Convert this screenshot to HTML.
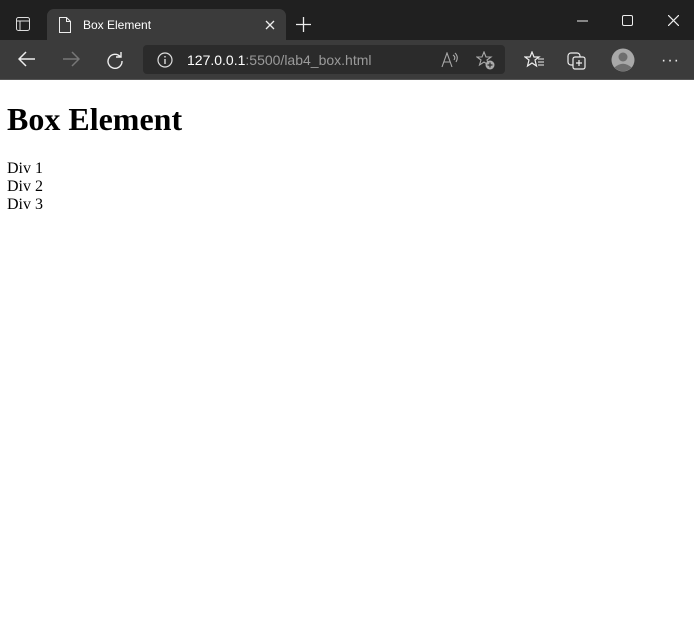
<!DOCTYPE html>
<html><head><style>
*{box-sizing:border-box}
html,body{margin:0;padding:0;width:694px;height:625px;overflow:hidden;background:#fff}
#chrome{position:absolute;left:0;top:0;width:694px;height:80px;background:#202020;font-family:"Liberation Sans",sans-serif}
#tab{position:absolute;left:47px;top:9px;width:239px;height:32px;background:#3b3b3b;border-radius:7px 7px 0 0}
#tool{position:absolute;left:0;top:40px;width:694px;height:39px;background:#3b3b3b}
#line{position:absolute;left:0;top:79px;width:694px;height:1px;background:#555}
#addr{position:absolute;left:143px;top:45px;width:362px;height:29px;background:#2b2b2b;border-radius:4px}
svg{position:absolute}
#page{position:absolute;top:80px;left:0;right:0;padding:0 7px;font-family:"Liberation Serif",serif;font-size:16px;color:#000}
h1{font-size:32px;margin:21px 0 22px;line-height:37px}
.d{line-height:18px}
</style></head><body>
<div id="chrome">
<svg style="left:16px;top:17px" width="14" height="14"><rect x="0.5" y="0.5" width="13" height="13" rx="2" fill="none" stroke="#ddd"/><line x1="0.5" y1="4" x2="13.5" y2="4" stroke="#ddd"/><line x1="4" y1="4" x2="4" y2="13.5" stroke="#ddd"/></svg>
<div id="tab">
<svg style="left:12px;top:8px" width="12" height="16"><path d="M0.5 0.5H7.5L11.5 4.5V15.5H0.5Z M7.5 0.5V4.5H11.5" fill="none" stroke="#eee"/></svg>
<div style="position:absolute;left:36px;top:9px;color:#fff;font-size:12px">Box Element</div>
<svg style="left:218px;top:11px" width="10" height="10"><path d="M1 1L9 9M9 1L1 9" stroke="#eee" stroke-width="1.3"/></svg>
</div>
<svg style="left:296px;top:17px" width="15" height="15"><path d="M7.5 0V15M0 7.5H15" stroke="#eee" stroke-width="1.3"/></svg>
<svg style="left:577px;top:20px" width="11" height="2"><path d="M0 1H11" stroke="#eee"/></svg>
<svg style="left:622px;top:15px" width="11" height="11"><rect x="0.5" y="0.5" width="10" height="10" rx="1.5" fill="none" stroke="#eee"/></svg>
<svg style="left:668px;top:15px" width="11" height="11"><path d="M0 0L11 11M11 0L0 11" stroke="#eee" stroke-width="1.2"/></svg>
<div id="tool"></div><div id="line"></div>
<svg style="left:18px;top:51px" width="18" height="16"><path d="M1 8H17M8 1L1 8L8 15" fill="none" stroke="#eee" stroke-width="1.5"/></svg>
<svg style="left:62px;top:51px" width="18" height="16"><path d="M1 8H17M10 1L17 8L10 15" fill="none" stroke="#777" stroke-width="1.5"/></svg>
<svg style="left:106px;top:51px" width="18" height="18"><path d="M14.5 6A7 7 0 1 0 16 10M15 1V6H10" fill="none" stroke="#eee" stroke-width="1.4"/></svg>
<div id="addr">
<svg style="left:14px;top:7px" width="16" height="16"><circle cx="8" cy="8" r="7" fill="none" stroke="#ddd" stroke-width="1.2"/><path d="M8 7V12M8 4V5.5" stroke="#ddd" stroke-width="1.4"/></svg>
<div style="position:absolute;left:44px;top:7px;font-size:14px;color:#fff">127.0.0.1<span style="color:#9a9a9a">:5500/lab4_box.html</span></div>
<svg style="left:298px;top:7px" width="18" height="16"><path d="M1 15L6 1L11 15M3 10H9M12 3Q15 5 13 8M14 1Q18 5 15 10" fill="none" stroke="#aaa" stroke-width="1.1"/></svg>
<svg style="left:333px;top:6px" width="19" height="19"><path d="M8 1L10 6H15L11 9L12.5 14L8 11L3.5 14L5 9L1 6H6Z" fill="none" stroke="#aaa" stroke-width="1.1"/><circle cx="14" cy="14" r="4.5" fill="#aaa"/><path d="M14 11.5V16.5M11.5 14H16.5" stroke="#2b2b2b" stroke-width="1.2"/></svg>
</div>
<svg style="left:524px;top:51px" width="20" height="18"><path d="M8 1L10 6H15L11 9L12.5 15L8 12L3.5 15L5 9L1 6H6Z" fill="none" stroke="#eee" stroke-width="1.2"/><path d="M14 8H20M14 11H20M14 14H20" stroke="#eee"/></svg>
<svg style="left:567px;top:50px" width="20" height="20"><rect x="1" y="3" width="12" height="12" rx="3" fill="none" stroke="#eee" stroke-width="1.2"/><rect x="6" y="7" width="12" height="12" rx="2" fill="#3b3b3b" stroke="#eee" stroke-width="1.2"/><path d="M12 10V16M9 13H15" stroke="#eee" stroke-width="1.2"/></svg>
<svg style="left:611px;top:48px" width="24" height="24"><circle cx="12" cy="12" r="11.5" fill="#a8a8a8"/><circle cx="12" cy="9" r="4.5" fill="#6e6e6e"/><path d="M3.5 19.5Q12 12 20.5 19.5A11.5 11.5 0 0 1 3.5 19.5Z" fill="#6e6e6e"/></svg>
<div style="position:absolute;left:661px;top:52px;color:#eee;font-size:16px;letter-spacing:1px">···</div>
</div>
<div id="page">
<h1>Box Element</h1>
<div class="d">Div 1</div>
<div class="d">Div 2</div>
<div class="d">Div 3</div>
</div>
</body></html>
